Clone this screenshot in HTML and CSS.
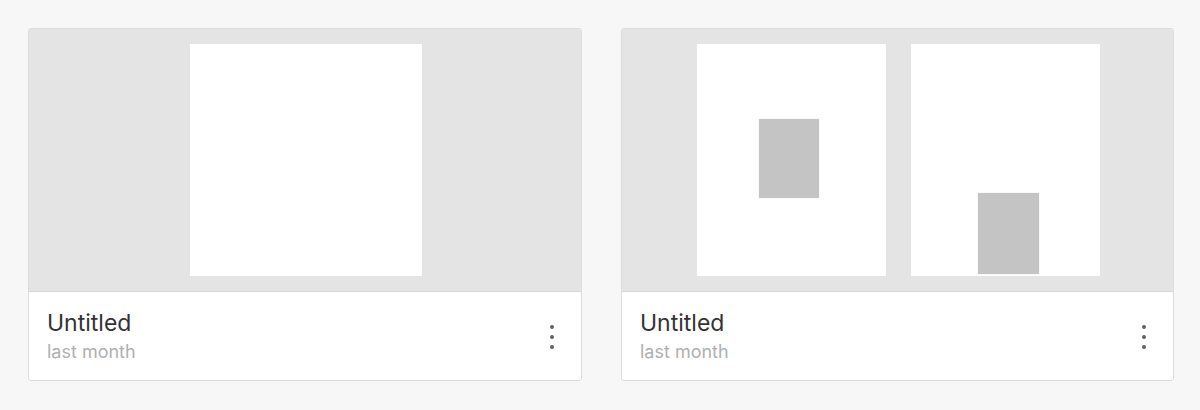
FILE: index.html
```html
<!DOCTYPE html>
<html>
<head>
<meta charset="utf-8">
<link rel="stylesheet" href="styles.css">
</head>
<body>
<div class="grid">
  <div class="card">
    <div class="preview">
      <div class="page single"></div>
    </div>
    <div class="footer">
      <div class="meta">
        <div class="title">Untitled</div>
        <div class="date">last month</div>
      </div>
      <div class="menu"><span></span><span></span><span></span></div>
    </div>
  </div>
  <div class="card">
    <div class="preview">
      <div class="page double"><div class="block b1"></div></div>
      <div class="page double"><div class="block b2"></div></div>
    </div>
    <div class="footer">
      <div class="meta">
        <div class="title">Untitled</div>
        <div class="date">last month</div>
      </div>
      <div class="menu"><span></span><span></span><span></span></div>
    </div>
  </div>
</div>
</body>
</html>
```
FILE: styles.css
```css
html, body {
  margin: 0;
  padding: 0;
  background: #f7f7f7;
  font-family: Inter, "Noto Sans", sans-serif;
}
.grid {
  display: grid;
  grid-template-columns: 554px 553px;
  column-gap: 39px;
  padding: 28px 0 0 28px;
}
.card {
  background: #fff;
  border: 1px solid #dcdcdc;
  border-radius: 3px;
  overflow: hidden;
  height: 353px;
  box-sizing: border-box;
}
.preview {
  background: #e4e4e4;
  height: 263px;
  border-bottom: 1px solid #d8d8d8;
  display: flex;
  justify-content: center;
  align-items: flex-start;
  gap: 25px;
  padding: 15px 0 0 2px;
  box-sizing: border-box;
}
.page {
  background: #fff;
  height: 232px;
  position: relative;
}
.page.single { width: 232px; }
.page.double { width: 189px; }
.block {
  position: absolute;
  background: #c4c4c4;
  box-shadow: 0 0 1px rgba(0,0,0,0.15);
}
.b1 { left: 62px; top: 75px; width: 60px; height: 79px; }
.b2 { left: 67px; top: 149px; width: 61px; height: 81px; }
.footer {
  display: flex;
  align-items: flex-start;
  justify-content: space-between;
  padding: 17px 27px 0 18px;
}
.title {
  font-size: 23px;
  color: #333;
  line-height: 28px;
}
.date {
  font-size: 18px;
  color: #b0b0b0;
  line-height: 22px;
  margin-top: 4px;
}
.menu {
  display: flex;
  flex-direction: column;
  gap: 6px;
  padding-top: 16px;
}
.menu span {
  width: 4px;
  height: 4px;
  border-radius: 50%;
  background: #616161;
}
```
